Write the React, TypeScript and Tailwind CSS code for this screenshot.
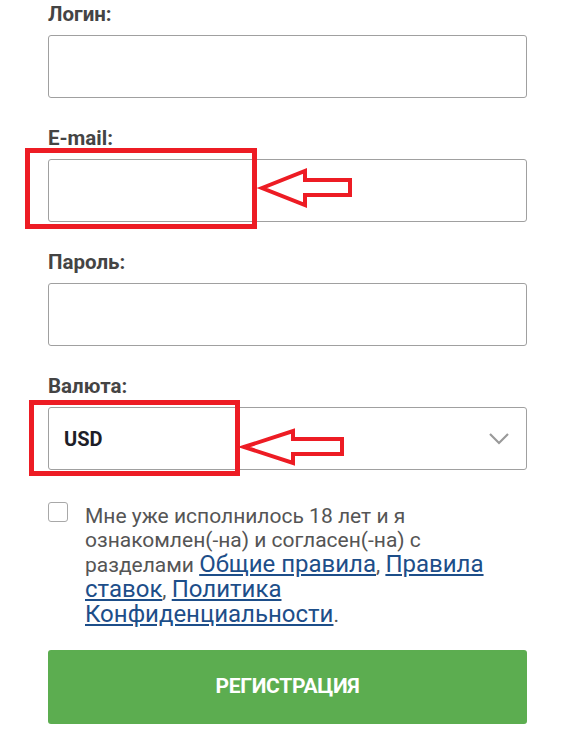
import React from "react";

const font = { fontFamily: "Roboto, 'Liberation Sans', sans-serif" };

function Field({ label, children, mb }: { label: string; children?: React.ReactNode; mb: string }) {
  return (
    <div className={mb}>
      <div className="text-[20.5px] leading-[24px] font-bold text-[#444] mb-[9px]">{label}</div>
      {children ?? <div className="h-[63px] rounded-[3px] border border-[#a0a0a0] bg-white" />}
    </div>
  );
}

function L({ children }: { children: React.ReactNode }) {
  return <a className="text-[#1d4e89] underline text-[24px] leading-[24px]">{children}</a>;
}

export default function App() {
  return (
    <div className="relative w-[576px] h-[745px] bg-white overflow-hidden" style={font}>
      <div className="pl-[48px] pr-[49px] pt-[2px]">
        <Field label="Логин:" mb="mb-[28px]" />
        <Field label="E-mail:" mb="mb-[28px]" />
        <Field label="Пароль:" mb="mb-[28px]" />
        <Field label="Валюта:" mb="mb-[32px]">
          <div className="h-[63px] rounded-[3px] border border-[#a0a0a0] bg-white flex items-center justify-between pl-[15px] pr-[17px]">
            <span className="text-[20px] font-bold text-[#1e1e28]">USD</span>
            <svg width="20" height="12" viewBox="0 0 20 12" className="mt-[1px]">
              <polyline points="1,1 10,10 19,1" fill="none" stroke="#9a9a9a" strokeWidth="2.2" />
            </svg>
          </div>
        </Field>
        <div className="flex items-start gap-[17px]">
          <div className="w-[20px] h-[20px] shrink-0 rounded-[3px] border border-[#a8a8a8] bg-white" />
          <p className="mt-[2px] text-[21px] leading-[24px] text-[#555]">
            Мне уже исполнилось 18 лет и я<br />
            ознакомлен(-на) и согласен(-на) с<br />
            разделами <L>Общие правила</L>, <L>Правила</L>
            <br />
            <L>ставок</L>, <L>Политика</L>
            <br />
            <L>Конфиденциальности</L>.
          </p>
        </div>
        <button className="mt-[23px] w-full h-[74px] rounded-[3px] bg-[#5cad50] text-white text-[21px] font-bold tracking-[-0.3px] flex items-center justify-center">
          РЕГИСТРАЦИЯ
        </button>
      </div>

      <div className="absolute left-[25px] top-[148px] w-[232px] h-[81px] border-[5px] border-[#ed1c24] pointer-events-none" />
      <div className="absolute left-[29px] top-[400px] w-[211px] h-[76px] border-[5px] border-[#ed1c24] pointer-events-none" />
      <svg className="absolute left-0 top-0 pointer-events-none" width="576" height="745" viewBox="0 0 576 745">
        <polygon
          points="262,188 305,171 305,180 350,180 350,195 305,195 305,205"
          fill="none"
          stroke="#ed1c24"
          strokeWidth="4"
          strokeLinejoin="miter"
        />
        <polygon
          points="244,447 293,431 293,439 342,439 342,454 293,454 293,463"
          fill="none"
          stroke="#ed1c24"
          strokeWidth="4"
          strokeLinejoin="miter"
        />
      </svg>
    </div>
  );
}
